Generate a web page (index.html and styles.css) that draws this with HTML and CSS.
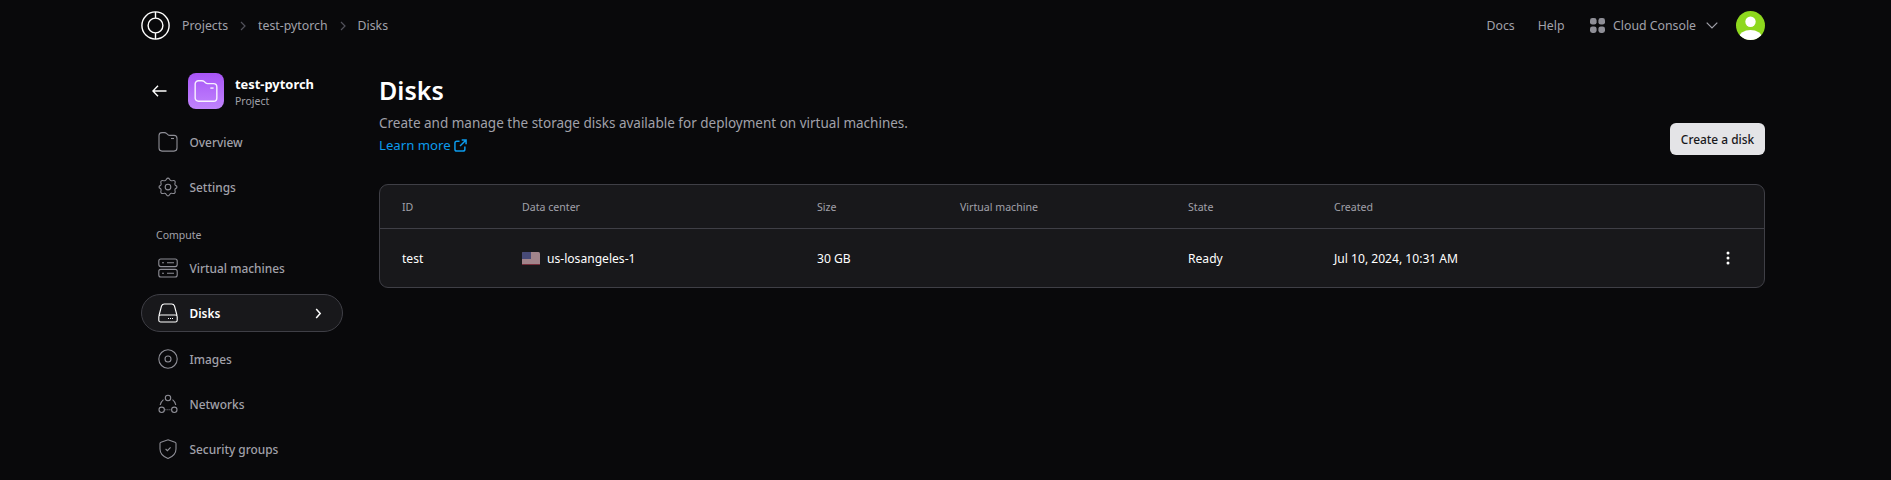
FILE: index.html
```html
<!DOCTYPE html>
<html lang="en">
<head>
<meta charset="utf-8">
<title>Disks</title>
<link rel="stylesheet" href="styles.css">
</head>
<body>
<div class="page">
  <header class="topbar">
    <div class="crumbs">
      <svg class="logo" viewBox="0 0 29 29" fill="none" stroke="#fff" stroke-width="1.4"><circle cx="14.5" cy="14.5" r="13.6"/><circle cx="14.5" cy="14.5" r="7.4"/><path d="M14.5 1v6M14.5 22v6"/></svg>
      <a class="crumb">Projects</a>
      <svg class="crumb-sep" viewBox="0 0 6 10" fill="none" stroke="#52525b" stroke-width="1.2"><path d="M1 1l4 4-4 4"/></svg>
      <a class="crumb">test-pytorch</a>
      <svg class="crumb-sep" viewBox="0 0 6 10" fill="none" stroke="#52525b" stroke-width="1.2"><path d="M1 1l4 4-4 4"/></svg>
      <a class="crumb">Disks</a>
    </div>
    <nav class="topnav">
      <a class="crumb docs">Docs</a>
      <a class="crumb help">Help</a>
      <svg class="apps" viewBox="0 0 15 15" fill="#8e8e96"><rect x="0" y="0" width="6.6" height="6.6" rx="2.4"/><rect x="8.4" y="0" width="6.6" height="6.6" rx="2.4"/><rect x="0" y="8.4" width="6.6" height="6.6" rx="2.4"/><rect x="8.4" y="8.4" width="6.6" height="6.6" rx="2.4"/></svg>
      <a class="crumb">Cloud Console</a>
      <svg class="chev" viewBox="0 0 12 7" fill="none" stroke="#a1a1aa" stroke-width="1.2"><path d="M.7.7L6 6l5.3-5.3"/></svg>
      <svg class="avatar" viewBox="0 0 29 29"><defs><clipPath id="av"><circle cx="14.5" cy="14.5" r="14.5"/></clipPath></defs><g clip-path="url(#av)"><rect width="29" height="29" fill="#8ed81e"/><circle cx="14.5" cy="10.7" r="5.2" fill="#fff"/><ellipse cx="14.5" cy="27" rx="11.5" ry="8" fill="#fff"/></g></svg>
    </nav>
  </header>

  <div class="layout">
    <aside class="sidebar">
      <div class="project">
        <svg class="back" viewBox="0 0 15 12" fill="none" stroke="#fff" stroke-width="1.4"><path d="M14.5 6H1M6 .8L.9 6 6 11.2"/></svg>
        <div class="tile">
          <svg viewBox="0 0 24 24" fill="none" stroke="#fff" stroke-width="1.3" stroke-opacity=".9"><path d="M2 5.5A3 3 0 0 1 5 2.500h3.300a3 3 0 0 1 2 .8l1.200 1.100a3 3 0 0 0 2 .8H19a3 3 0 0 1 3 3V18.500a3 3 0 0 1-3 3H5a3 3 0 0 1-3-3z"/><path d="M16 9.300h3"/></svg>
        </div>
        <div class="project-text">
          <div class="project-name">test-pytorch</div>
          <div class="project-kind">Project</div>
        </div>
      </div>
      <ul class="menu">
        <li class="item">
          <svg class="ico" viewBox="0 0 20 20" fill="none" stroke="#8e8e96" stroke-width="1.1"><path d="M1 3.500A3 3 0 0 1 4 .6h2.500a3 3 0 0 1 2 .8l1.300 1.200a3 3 0 0 0 2 .8H16a3 3 0 0 1 3 3v9.700a3 3 0 0 1-3 3H4a3 3 0 0 1-3-3z"/><path d="M13 6.500h3"/></svg>
          <span>Overview</span>
        </li>
        <li class="item">
          <svg class="ico" viewBox="0 0 24 24" fill="none" stroke="#8e8e96" stroke-width="1.300"><path d="M10.300 2.300a2 2 0 0 1 3.400 0l.8 1.300a2 2 0 0 0 2.200.9l1.500-.3a2 2 0 0 1 2.400 2.400l-.3 1.500a2 2 0 0 0 .9 2.200l1.300.8a2 2 0 0 1 0 1.800l-1.300.8a2 2 0 0 0-.9 2.200l.3 1.500a2 2 0 0 1-2.400 2.400l-1.500-.3a2 2 0 0 0-2.200.9l-.8 1.300a2 2 0 0 1-3.400 0l-.8-1.300a2 2 0 0 0-2.200-.9l-1.500.3a2 2 0 0 1-2.400-2.400l.3-1.500a2 2 0 0 0-.9-2.200l-1.300-.8a2 2 0 0 1 0-1.800l1.300-.8a2 2 0 0 0 .9-2.200l-.3-1.500a2 2 0 0 1 2.400-2.400l1.500.3a2 2 0 0 0 2.200-.9z"/><circle cx="12" cy="12" r="3.400"/></svg>
          <span>Settings</span>
        </li>
        <li class="label">Compute</li>
        <li class="item">
          <svg class="ico" viewBox="0 0 20 20" fill="none" stroke="#8e8e96" stroke-width="1.100"><rect x=".8" y="1" width="18.400" height="7.600" rx="2"/><rect x=".8" y="11.400" width="18.400" height="7.600" rx="2"/><path d="M4 4.800h2M9 4.800h7M4 15.200h2M9 15.200h7"/></svg>
          <span>Virtual machines</span>
        </li>
        <li class="item active">
          <svg class="ico" viewBox="0 0 20 20" fill="none" stroke="#fff" stroke-width="1.100"><path d="M1 12.500L3.500 3A3 3 0 0 1 6.400 1h7.200a3 3 0 0 1 2.900 2l2.500 9.500"/><rect x=".8" y="12" width="18.400" height="7" rx="1.800"/><path d="M10 15.500h6" stroke-dasharray="1 1"/></svg>
          <span>Disks</span>
          <svg class="go" viewBox="0 0 7 11" fill="none" stroke="#fff" stroke-width="1.500"><path d="M1.200 1l4 4.500-4 4.500"/></svg>
        </li>
        <li class="item">
          <svg class="ico" viewBox="0 0 20 20" fill="none" stroke="#8e8e96" stroke-width="1.100"><circle cx="10" cy="10" r="9.200"/><circle cx="10" cy="10" r="3"/></svg>
          <span>Images</span>
        </li>
        <li class="item">
          <svg class="ico" viewBox="0 0 20 20" fill="none" stroke="#8e8e96" stroke-width="1.100"><circle cx="10" cy="4" r="2.700"/><circle cx="3.700" cy="15.800" r="2.700"/><circle cx="16.300" cy="15.800" r="2.700"/><path d="M6.600 15.800h6.800" stroke-dasharray="1 1"/><path d="M2.200 11a9 9 0 0 1 3.300-5.400M14.500 5.600a9 9 0 0 1 3.300 5.400"/></svg>
          <span>Networks</span>
        </li>
        <li class="item">
          <svg class="ico" viewBox="0 0 20 20" fill="none" stroke="#8e8e96" stroke-width="1.100"><path d="M10 .8l7 2.400a1.500 1.500 0 0 1 1 1.400v5.400c0 4-3 7.600-8 9.500-5-1.900-8-5.500-8-9.500V4.600a1.500 1.500 0 0 1 1-1.400z"/><path d="M7.600 10l1.800 1.700 3.200-3.400"/></svg>
          <span>Security groups</span>
        </li>
      </ul>
    </aside>

    <main class="content">
      <div class="head">
        <div>
          <h1 class="title">Disks</h1>
          <p class="desc">Create and manage the storage disks available for deployment on virtual machines.</p>
          <a class="learn">Learn more
            <svg viewBox="0 0 14 14" fill="none" stroke="#0c9bec" stroke-width="1.600"><path d="M6 2.300H3a2 2 0 0 0-2 2V11a2 2 0 0 0 2 2h6.700a2 2 0 0 0 2-2V8M8.300 1H13v4.700M13 1L6.500 7.500"/></svg>
          </a>
        </div>
        <button class="primary">Create a disk</button>
      </div>

      <div class="table">
        <div class="row row-head">
          <div>ID</div><div>Data center</div><div>Size</div><div>Virtual machine</div><div>State</div><div>Created</div><div></div>
        </div>
        <div class="row row-body">
          <div>test</div>
          <div class="dc">
            <svg class="flag" viewBox="0 0 18 13"><rect width="18" height="13" rx="1.500" fill="#a98a92"/><path d="M0 12h18v.5a.5.5 0 0 1-.5.5H.5a.5.5 0 0 1-.5-.5z" fill="#7a2f3c"/><path d="M1.500 0H9v7H0V1.500A1.500 1.500 0 0 1 1.500 0z" fill="#4a4d7c"/></svg>
            us-losangeles-1
          </div>
          <div>30 GB</div>
          <div></div>
          <div>Ready</div>
          <div>Jul 10, 2024, 10:31 AM</div>
          <div class="more"><svg viewBox="0 0 4 14" fill="#fff"><circle cx="2" cy="2" r="1.500"/><circle cx="2" cy="7" r="1.500"/><circle cx="2" cy="12" r="1.500"/></svg></div>
        </div>
      </div>
    </main>
  </div>
</div>
</body>
</html>
```

FILE: styles.css
```css
* { box-sizing: border-box; }
html, body { margin: 0; height: 100%; }
body {
  background: #09090b;
  color: #fff;
  font-family: "Noto Sans", "Open Sans", sans-serif;
  font-size: 13px;
  overflow: hidden;
}
.page { padding: 0 126px 0 141px; }

.topbar { height: 51px; display: flex; align-items: center; justify-content: space-between; }
.crumbs, .topnav { display: flex; align-items: center; }
.logo { width: 29px; height: 29px; margin-right: 12px; }
.crumb { color: #a1a1aa; font-size: 12.3px; line-height: 18px; margin-top: 1px; }
.crumb-sep { width: 6px; height: 10px; margin: 0 12px; }
.docs { margin-right: 23px; }
.help { margin-right: 25px; }
.apps { width: 15px; height: 15px; margin-right: 8.500px; }
.chev { width: 12px; height: 7px; margin: 0 18px 0 10px; }
.avatar { width: 29px; height: 29px; }

.layout { display: grid; grid-template-columns: 202px 1fr; column-gap: 36px; }

.project { display: flex; align-items: center; margin-top: 22px; padding-left: 11px; height: 36px; }
.back { width: 15px; height: 12px; margin-right: 21px; }
.tile {
  width: 36px; height: 36px; border-radius: 8px; margin-right: 11px;
  background: linear-gradient(180deg, #a855f7, #c084fc);
  display: flex; align-items: center; justify-content: center;
}
.tile svg { width: 26px; height: 26px; }
.project-text { padding-top: 1px; }
.project-name { font-weight: 700; font-size: 12.9px; line-height: 18px; }
.project-kind { color: #a1a1aa; font-size: 10.5px; line-height: 15px; margin-top: 1px; }

.menu { list-style: none; margin: 14px 0 0; padding: 0; display: flex; flex-direction: column; gap: 7px; }
.item {
  height: 38px; display: flex; align-items: center; padding-left: 16px; padding-right: 20px;
  color: #a1a1aa; font-size: 11.9px; font-weight: 500; border: 1px solid transparent; border-radius: 19px;
}
.item .ico { width: 20px; height: 20px; margin-right: 11.500px; flex: none; }
.item.active { background: #18181b; border-color: #3f3f46; color: #fff; font-weight: 600; margin-bottom: 1px; }
.go { width: 7px; height: 11px; margin-left: auto; }
.label { color: #a1a1aa; font-size: 10.5px; line-height: 16px; height: 16px; padding-left: 15px; margin-top: 14px; margin-bottom: -1px; }

.head { display: flex; justify-content: space-between; align-items: flex-end; margin-top: 22px; }
.title { margin: 0; font-size: 25px; font-weight: 600; line-height: 34px; }
.desc { margin: 5px 0 0; color: #a1a1aa; font-size: 13.5px; line-height: 22px; }
.learn { display: inline-flex; align-items: center; gap: 3px; color: #0c9bec; font-size: 13.2px; line-height: 22px; }
.learn svg { width: 13px; height: 13px; }
.primary {
  width: 95px; height: 32px; background: #e4e4e7; color: #18181b; border: 0; border-radius: 6px;
  font: 500 11.9px "Noto Sans", sans-serif; margin-bottom: 1px;
}

.table { margin-top: 28px; background: #18181b; border: 1px solid #3f3f46; border-radius: 9px; }
.row { display: grid; grid-template-columns: 120px 295px 143px 228px 146px 1fr 38px; padding-left: 22px; align-items: center; }
.row-head { height: 44px; border-bottom: 1px solid #3f3f46; color: #a1a1aa; font-size: 10.6px; }
.row-body { height: 58px; color: #fff; font-size: 12.1px; }
.dc { display: flex; align-items: center; gap: 7px; }
.flag { width: 18px; height: 13px; opacity: .95; }
.more { display: flex; }
.more svg { width: 4px; height: 14px; }
```
